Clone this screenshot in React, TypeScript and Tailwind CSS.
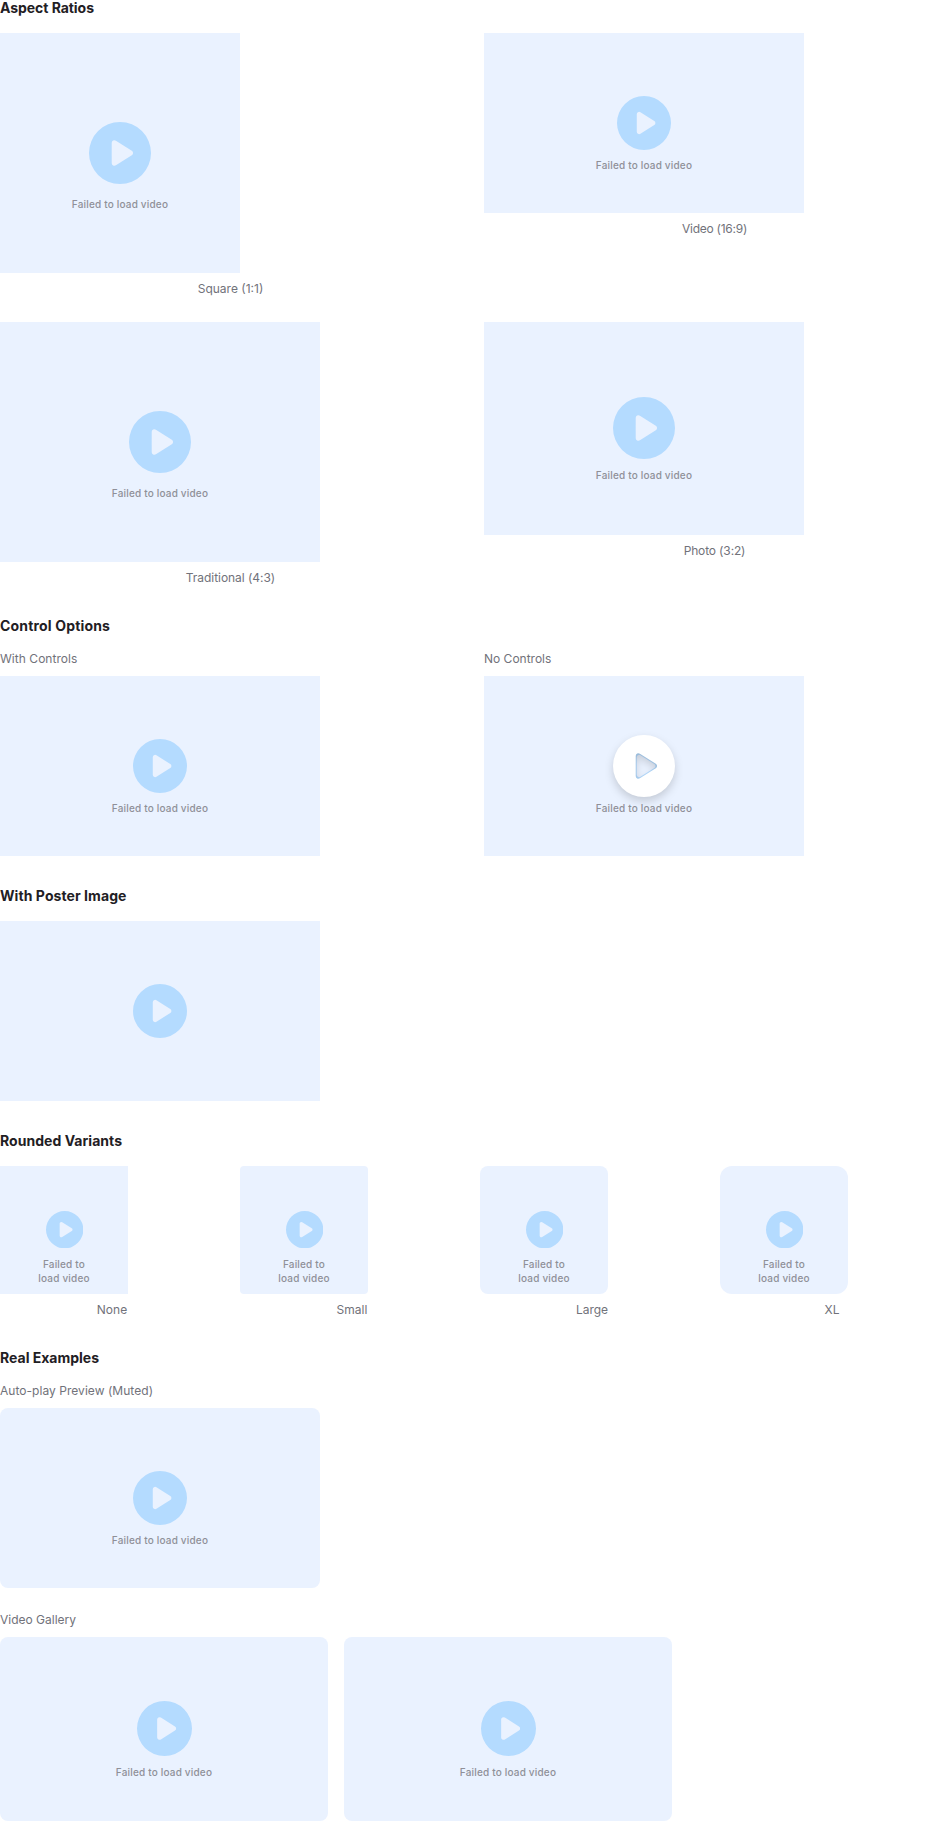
import type { ReactNode } from 'react';

type PlayIconProps = { className: string };

function PlayIcon({ className }: PlayIconProps) {
  return (
    <svg viewBox="0 0 62 62" fill="currentColor" className={className} aria-hidden="true">
      <path
        fillRule="evenodd"
        clipRule="evenodd"
        d="M31 62a31 31 0 1 0 0-62 31 31 0 0 0 0 62ZM26.9 18.7A2.7 2.7 0 0 0 22.7 21V41a2.7 2.7 0 0 0 4.2 2.3l15.9-10a2.7 2.7 0 0 0 0-4.6L26.9 18.7Z"
      />
    </svg>
  );
}

type VideoProps = {
  box: string;
  icon: string;
  message?: string;
  overlay?: boolean;
};

function Video({ box, icon, message, overlay = false }: VideoProps) {
  return (
    <div className={`grid grid-cols-1 grid-rows-1 overflow-hidden bg-[#eaf2ff] ${box}`}>
      <PlayIcon className={`col-start-1 row-start-1 place-self-center text-[#b4dbff] ${icon}`} />
      {message && (
        <p
          className={`col-start-1 row-start-1 w-[112px] justify-self-center self-start text-center text-[10px] leading-[14px] font-[550] tracking-[0.18px] text-[#8f9098] ${message}`}
        >
          Failed to load video
        </p>
      )}
      {overlay && (
        <PlayIcon className="col-start-1 row-start-1 size-[62px] place-self-center text-white drop-shadow-[0_4px_4px_rgba(0,0,0,0.16)]" />
      )}
    </div>
  );
}

type SectionProps = { title: string; tracking?: string; children: ReactNode };

function Section({ title, tracking = '', children }: SectionProps) {
  return (
    <section className="flex flex-col gap-4">
      <h3 className={`text-sm leading-[16.8px] font-bold text-[#1f2024] ${tracking}`}>{title}</h3>
      {children}
    </section>
  );
}

function Label({ className = '', children }: { className?: string; children: ReactNode }) {
  return <p className={`text-xs leading-[16.8px] text-[#71727a] ${className}`}>{children}</p>;
}

const ratios = [
  { label: 'Square (1:1)', tracking: '', box: 'w-60 aspect-square', icon: 'size-[62px]', message: 'mt-[164px]' },
  { label: 'Video (16:9)', tracking: 'tracking-[-0.25px]', box: 'w-80 aspect-video', icon: 'size-[54px]', message: 'mt-[125px]' },
  { label: 'Traditional (4:3)', tracking: 'tracking-[-0.04px]', box: 'w-80 aspect-[4/3]', icon: 'size-[62px]', message: 'mt-[164px]' },
  { label: 'Photo (3:2)', tracking: 'tracking-[-0.14px]', box: 'w-80 aspect-[3/2]', icon: 'size-[62px]', message: 'mt-[146px]' },
];

const corners = [
  { label: 'None', box: 'rounded-none' },
  { label: 'Small', box: 'rounded-[4px]' },
  { label: 'Large', box: 'rounded-[8px]' },
  { label: 'XL', box: 'rounded-[12px]' },
];

export default function App() {
  return (
    <main className="flex w-full flex-col gap-8 bg-white font-['Inter',sans-serif]">
      <Section title="Aspect Ratios" tracking="tracking-[-0.05px]">
        <div className="grid grid-cols-2 gap-6">
          {ratios.map((r) => (
            <div key={r.label} className="flex flex-col gap-2">
              <Video box={r.box} icon={r.icon} message={r.message} />
              <Label className={`pl-px text-center ${r.tracking}`}>{r.label}</Label>
            </div>
          ))}
        </div>
      </Section>

      <Section title="Control Options" tracking="tracking-[0.17px]">
        <div className="grid grid-cols-2 gap-6">
          <div className="flex flex-col gap-2">
            <Label className="tracking-[0.04px]">With Controls</Label>
            <Video box="w-80 aspect-video" icon="size-[54px]" message="mt-[125px]" />
          </div>
          <div className="flex flex-col gap-2">
            <Label>No Controls</Label>
            <Video box="w-80 aspect-video" icon="size-[54px]" message="mt-[125px]" overlay />
          </div>
        </div>
      </Section>

      <Section title="With Poster Image" tracking="tracking-[0.07px]">
        <Video box="w-80 aspect-video" icon="size-[54px]" />
      </Section>

      <Section title="Rounded Variants" tracking="tracking-[0.04px]">
        <div className="grid grid-cols-4 gap-4">
          {corners.map((c) => (
            <div key={c.label} className="flex flex-col gap-2">
              <Video box={`size-32 ${c.box}`} icon="ml-px size-[37.33px]" message="mt-[91px] px-6" />
              <Label className="text-center">{c.label}</Label>
            </div>
          ))}
        </div>
      </Section>

      <Section title="Real Examples">
        <div className="flex flex-col gap-6">
          <div className="flex flex-col gap-2">
            <Label className="tracking-[0.04px]">Auto-play Preview (Muted)</Label>
            <Video box="w-80 aspect-video rounded-[8px]" icon="size-[54px]" message="mt-[125px]" />
          </div>
          <div className="flex flex-col gap-2">
            <Label>Video Gallery</Label>
            <div className="grid max-w-2xl grid-cols-2 gap-4">
              <Video box="w-full aspect-video rounded-[8px]" icon="mb-px size-[55px]" message="mt-[128px]" />
              <Video box="w-full aspect-video rounded-[8px]" icon="mb-px size-[55px]" message="mt-[128px]" />
            </div>
          </div>
        </div>
      </Section>
    </main>
  );
}
